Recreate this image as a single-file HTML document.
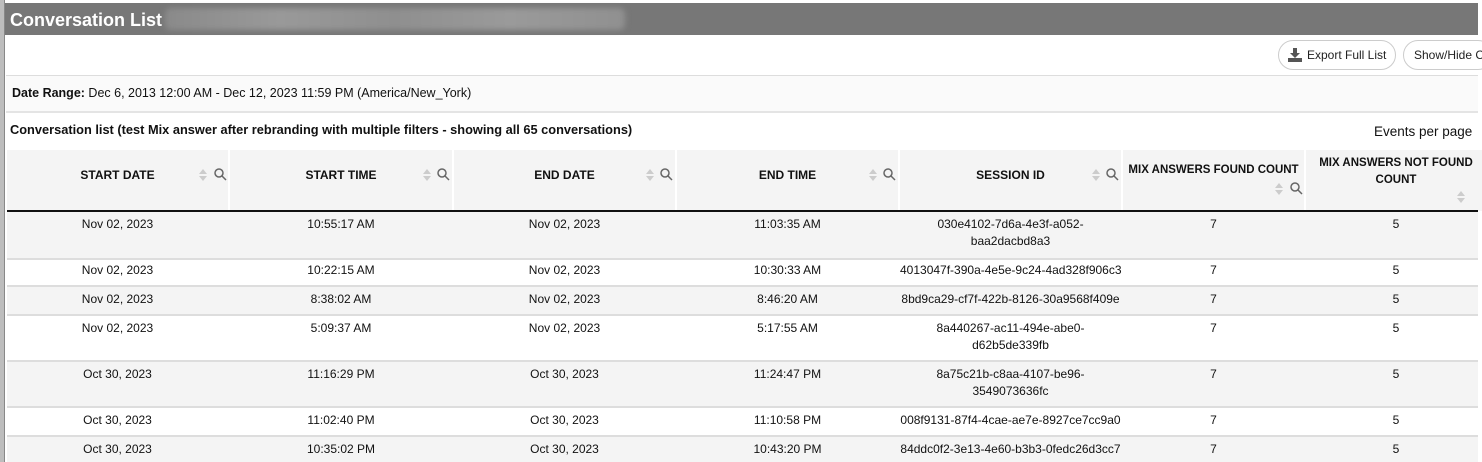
<!DOCTYPE html>
<html><head><meta charset="utf-8"><style>
*{margin:0;padding:0;box-sizing:border-box}
html,body{width:1482px;height:462px;overflow:hidden}
body{background:#fff;font-family:"Liberation Sans",Arial,sans-serif;font-size:12px;color:#111;position:relative}
.abs{position:absolute}
.title{left:5px;top:3px;width:1473px;height:32px;background:#777;color:#fff;font-weight:bold;font-size:18px;padding:7px 0 0 5px}
.blur{left:165px;top:8px;width:460px;height:22px;background:linear-gradient(90deg,#8a8a8a,#999,#8f8f8f,#9a9a9a,#909090);filter:blur(3px);border-radius:6px}
.lb{left:0;top:0;width:5px;height:462px;background:#bdbdbd;border-right:1px solid #888}
.btn{top:40px;height:30px;border:1px solid #ccc;border-radius:15px;background:#fff;font-size:12px;color:#222;padding:7px 0 0 10px;white-space:nowrap;overflow:hidden}
.dr{left:6px;top:75px;width:1472px;height:38px;background:#fafafa;border-top:1px solid #ddd;border-bottom:2px solid #e4e4e4;padding:10px 0 0 6px;font-size:12.5px}
.hd{top:150px;height:61px;background:#f4f4f4;font-weight:bold;text-align:center;padding-top:18px}
.hl{left:7px;top:210px;width:1471px;height:2px;background:#111}
.row{left:7px;width:1471px;border-bottom:2px solid #ddd}
.c{position:absolute;text-align:center;line-height:17px;white-space:nowrap}
</style></head><body>
<div class="abs lb"></div>
<div class="abs title">Conversation List</div>
<div class="abs blur"></div>
<div class="abs btn" style="left:1278px;width:118px;">
<svg width="14" height="14" viewBox="0 0 14 14" style="position:absolute;left:9px;top:7px"><path d="M5 0h4v5h3L7 10 2 5h3z" fill="#555"/><rect x="0" y="10" width="14" height="4" fill="#555"/></svg>
<span style="margin-left:18px">Export Full List</span></div>
<div class="abs btn" style="left:1403px;width:90px;">Show/Hide C</div>
<div class="abs dr"><b>Date Range:</b> Dec 6, 2013 12:00 AM - Dec 12, 2023 11:59 PM (America/New_York)</div>
<div class="abs" style="left:10px;top:122px;font-weight:bold;font-size:12.8px">Conversation list (test Mix answer after rebranding with multiple filters - showing all 65 conversations)</div>
<div class="abs" style="left:1374px;top:124px;font-size:13.5px;white-space:nowrap">Events per page</div>

<div class="abs hd" style="left:7px;width:221px">START DATE</div>
<div class="abs hd" style="left:230px;width:222px">START TIME</div>
<div class="abs hd" style="left:454px;width:221px">END DATE</div>
<div class="abs hd" style="left:677px;width:221px">END TIME</div>
<div class="abs hd" style="left:900px;width:221px">SESSION ID</div>
<div class="abs hd" style="left:1123px;width:181px;padding-top:14px;font-size:11.5px">MIX ANSWERS FOUND COUNT</div>
<div class="abs hd" style="left:1306px;width:180px;padding-top:5px;font-size:11.5px;line-height:17px">MIX ANSWERS NOT FOUND<br>COUNT</div>
<div class="abs hl"></div>

<svg class="abs" style="left:0;top:0" width="1482" height="230">
<g fill="#ccc">
<path d="M199 174l4-5 4 5zM199 176l4 5 4-5z"/>
<path d="M423 174l4-5 4 5zM423 176l4 5 4-5z"/>
<path d="M646 174l4-5 4 5zM646 176l4 5 4-5z"/>
<path d="M869 174l4-5 4 5zM869 176l4 5 4-5z"/>
<path d="M1092 174l4-5 4 5zM1092 176l4 5 4-5z"/>
<path d="M1275 188l4-5 4 5zM1275 190l4 5 4-5z"/>
<path d="M1457 196l4-5 4 5zM1457 198l4 5 4-5z"/>
</g>
<g fill="none" stroke="#666" stroke-width="1.5">
<circle cx="219" cy="173" r="4"/><path d="M222 176l4 4"/>
<circle cx="442" cy="173" r="4"/><path d="M445 176l4 4"/>
<circle cx="665" cy="173" r="4"/><path d="M668 176l4 4"/>
<circle cx="888" cy="173" r="4"/><path d="M891 176l4 4"/>
<circle cx="1111" cy="173" r="4"/><path d="M1114 176l4 4"/>
<circle cx="1295" cy="187" r="4"/><path d="M1298 190l4 4"/>
</g>
</svg>

<div class="abs row" style="top:212px;height:48px;background:#f4f4f4"></div>
<div class="abs row" style="top:260px;height:27px;background:#fff"></div>
<div class="abs row" style="top:287px;height:29px;background:#f4f4f4"></div>
<div class="abs row" style="top:316px;height:46px;background:#fff"></div>
<div class="abs row" style="top:362px;height:46px;background:#f4f4f4"></div>
<div class="abs row" style="top:408px;height:29px;background:#fff"></div>
<div class="abs row" style="top:437px;height:30px;background:#f4f4f4"></div>

<div id="cells"></div>
<script>
var rows=[
[216,["Nov 02, 2023","10:55:17 AM","Nov 02, 2023","11:03:35 AM","030e4102-7d6a-4e3f-a052-<br>baa2dacbd8a3","7","5"]],
[262,["Nov 02, 2023","10:22:15 AM","Nov 02, 2023","10:30:33 AM","4013047f-390a-4e5e-9c24-4ad328f906c3","7","5"]],
[291,["Nov 02, 2023","8:38:02 AM","Nov 02, 2023","8:46:20 AM","8bd9ca29-cf7f-422b-8126-30a9568f409e","7","5"]],
[320,["Nov 02, 2023","5:09:37 AM","Nov 02, 2023","5:17:55 AM","8a440267-ac11-494e-abe0-<br>d62b5de339fb","7","5"]],
[366,["Oct 30, 2023","11:16:29 PM","Oct 30, 2023","11:24:47 PM","8a75c21b-c8aa-4107-be96-<br>3549073636fc","7","5"]],
[412,["Oct 30, 2023","11:02:40 PM","Oct 30, 2023","11:10:58 PM","008f9131-87f4-4cae-ae7e-8927ce7cc9a0","7","5"]],
[441,["Oct 30, 2023","10:35:02 PM","Oct 30, 2023","10:43:20 PM","84ddc0f2-3e13-4e60-b3b3-0fedc26d3cc7","7","5"]]];
var cols=[[7,221],[230,222],[454,221],[677,221],[900,221],[1123,181],[1306,180]];
var h="";
rows.forEach(function(r){r[1].forEach(function(t,i){h+='<div class="c" style="left:'+cols[i][0]+'px;width:'+cols[i][1]+'px;top:'+r[0]+'px">'+t+'</div>';});});
document.getElementById("cells").innerHTML=h;
</script>
</body></html>
